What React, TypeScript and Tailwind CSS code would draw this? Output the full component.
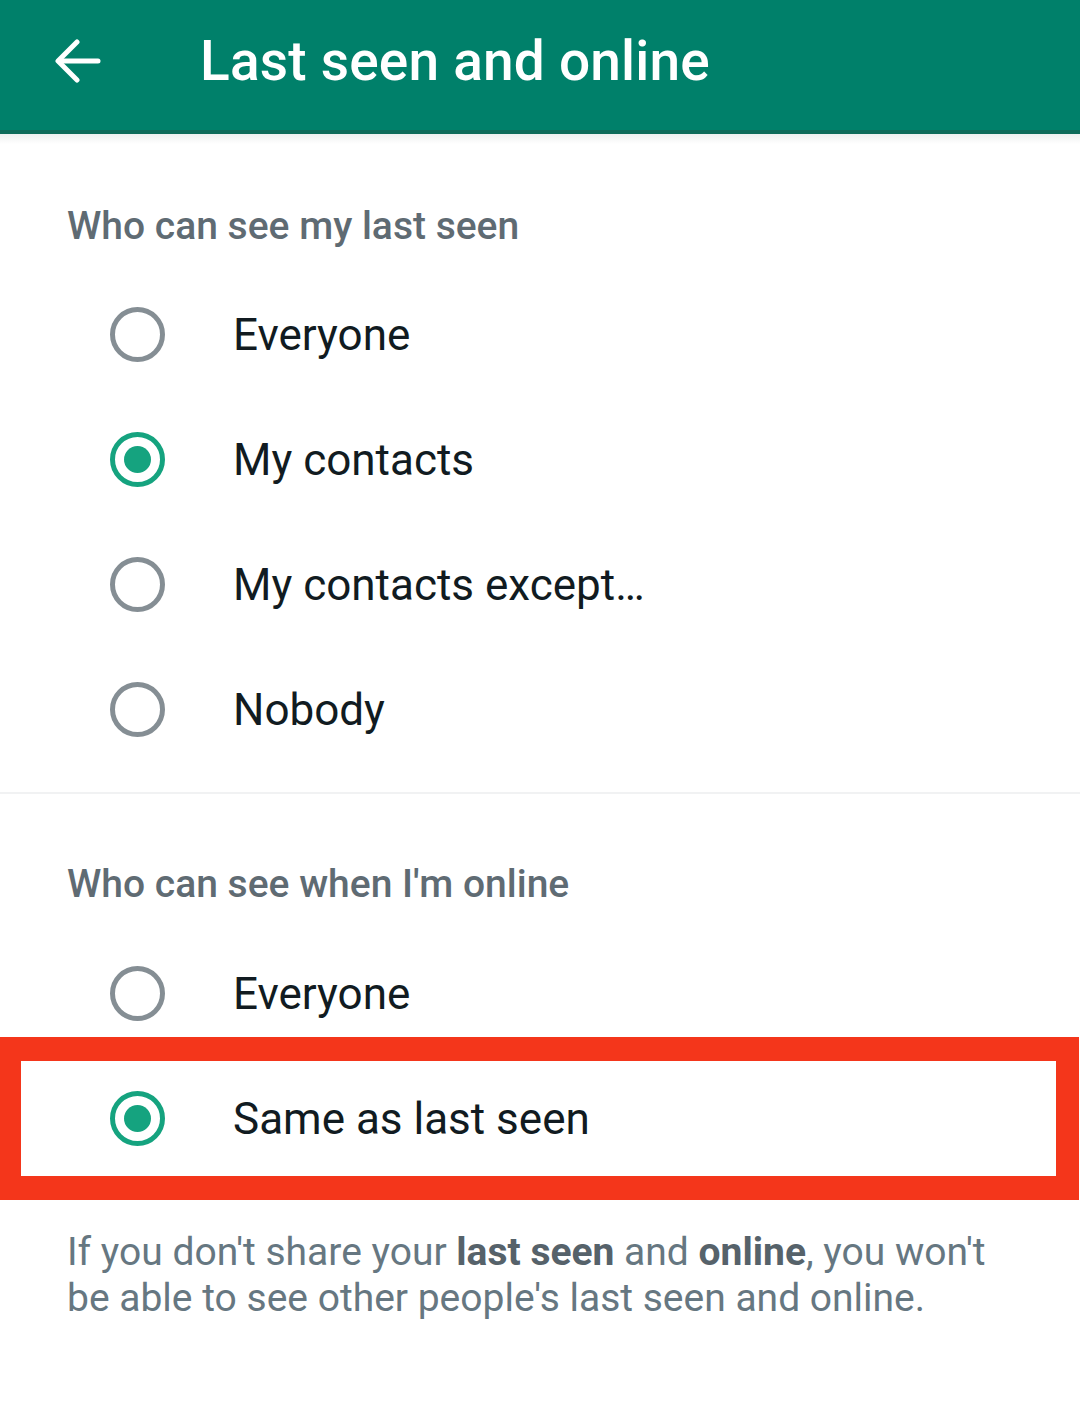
import React from "react";

function Radio({ checked }: { checked?: boolean }) {
  return (
    <div className="w-[233px] flex justify-start pl-[110px]">
      <div
        className={
          "w-[55px] h-[55px] rounded-full border-[5px] flex items-center justify-center " +
          (checked ? "border-[#15a37f]" : "border-[#858e94]")
        }
      >
        {checked && <div className="w-[27px] h-[27px] rounded-full bg-[#15a37f]" />}
      </div>
    </div>
  );
}

function Row({ label, checked }: { label: string; checked?: boolean }) {
  return (
    <div className="h-[125px] flex items-center">
      <Radio checked={checked} />
      <span className="text-[44px] text-[#111b21] leading-none">{label}</span>
    </div>
  );
}

export default function App() {
  return (
    <div className="w-[1080px] h-[1416px] bg-white font-['Roboto',sans-serif] relative overflow-hidden">
      <header className="h-[134px] bg-[#00806a] flex items-center border-b-[4px] border-[#0f6b5a]">
        <div className="w-[200px] pl-[55px] flex items-center -mt-[8px]">
          <svg width="46" height="44" viewBox="0 0 46 44" fill="none" stroke="white" strokeWidth="5" strokeLinecap="round" strokeLinejoin="round">
            <path d="M43 22H4" />
            <path d="M22 3L3 22L22 41" />
          </svg>
        </div>
        <h1 className="text-white text-[55px] font-medium leading-none -mt-[8px] tracking-[0.2px]">Last seen and online</h1>
      </header>
      <div className="h-[10px] bg-gradient-to-b from-[#eef0f0] to-white" />

      <div className="h-[128px] flex items-center pl-[67px] pt-[36px]">
        <span className="text-[39px] text-[#5f6b73] font-medium leading-none">Who can see my last seen</span>
      </div>
      <Row label="Everyone" />
      <Row label="My contacts" checked />
      <Row label="My contacts except…" />
      <Row label="Nobody" />

      <div className="h-[20px]" />
      <div className="h-[2px] bg-[#f1f2f3]" />

      <div className="h-[137px] flex items-center pl-[67px] pt-[44px]">
        <span className="text-[39px] text-[#5f6b73] font-medium leading-none">Who can see when I'm online</span>
      </div>
      <Row label="Everyone" />
      <Row label="Same as last seen" checked />

      <p className="pl-[67px] pr-[80px] pt-[48px] text-[39px] leading-[46px] text-[#667781]">
        If you don't share your <b className="font-bold text-[#56626a]">last seen</b> and{" "}
        <b className="font-bold text-[#56626a]">online</b>, you won't be able to see other people's last seen and online.
      </p>

      <div className="absolute left-0 top-[1037px] w-[1079px] h-[163px] border-[#f4361b] border-t-[24px] border-b-[24px] border-l-[21px] border-r-[23px] pointer-events-none" />
    </div>
  );
}
